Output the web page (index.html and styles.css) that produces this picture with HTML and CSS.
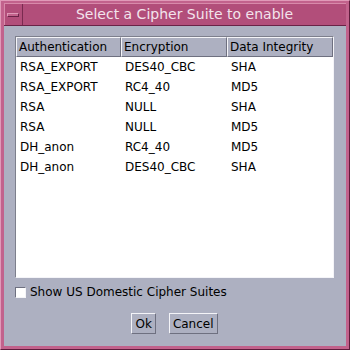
FILE: index.html
```html
<!DOCTYPE html>
<html lang="en">
<head>
    <meta charset="UTF-8">
    <title>Select a Cipher Suite to enable</title>
    <link rel="stylesheet" href="styles.css">
</head>
<body>
    <div class="window">
        <div class="titlebar">
            <div class="menu-btn"><span class="menu-bar"></span></div>
            <div class="title">Select a Cipher Suite to enable</div>
        </div>

        <div class="content">
            <!-- cipher table -->
            <div class="table">
                <div class="row head">
                    <div class="cell">Authentication</div>
                    <div class="cell">Encryption</div>
                    <div class="cell">Data Integrity</div>
                </div>
                <div class="row"><div class="cell">RSA_EXPORT</div><div class="cell">DES40_CBC</div><div class="cell">SHA</div></div>
                <div class="row"><div class="cell">RSA_EXPORT</div><div class="cell">RC4_40</div><div class="cell">MD5</div></div>
                <div class="row"><div class="cell">RSA</div><div class="cell">NULL</div><div class="cell">SHA</div></div>
                <div class="row"><div class="cell">RSA</div><div class="cell">NULL</div><div class="cell">MD5</div></div>
                <div class="row"><div class="cell">DH_anon</div><div class="cell">RC4_40</div><div class="cell">MD5</div></div>
                <div class="row"><div class="cell">DH_anon</div><div class="cell">DES40_CBC</div><div class="cell">SHA</div></div>
            </div>

            <label class="check">
                <span class="box"></span>
                <span>Show US Domestic Cipher Suites</span>
            </label>

            <div class="buttons">
                <button class="btn">Ok</button>
                <button class="btn">Cancel</button>
            </div>
        </div>
    </div>
</body>
</html>
```

FILE: styles.css
```css
body {
    margin: 0;
    font-family: "DejaVu Sans", sans-serif;
    font-size: 12px;
    color: #000;
}
.window {
    width: 350px;
    height: 350px;
    box-sizing: border-box;
    display: flex;
    flex-direction: column;
    background-color: #c2628c;
    border: 1px solid;
    border-color: #e09ab8 #5e1c3c #5e1c3c #e09ab8;
    padding: 2px 3px 3px 3px;
}
.titlebar {
    height: 21px;
    display: flex;
    background-color: #b24e7a;
    border-top: 1px solid #d88aaa;
}
.menu-btn {
    width: 18px;
    display: flex;
    align-items: center;
    justify-content: center;
    border-right: 1px solid #7a2a50;
    box-shadow: inset 1px 0 #d88aaa;
}
.menu-bar {
    width: 10px;
    height: 2px;
    background-color: #c2628c;
    border: 1px solid;
    border-color: #e09ab8 #6a2246 #6a2246 #e09ab8;
}
.title {
    flex: 1;
    text-align: center;
    color: #f2e4ec;
    font-size: 14px;
    line-height: 20px;
}
.content {
    flex: 1;
    background-color: #adb0c1;
    padding: 10px 12px 12px 11px;
    display: flex;
    flex-direction: column;
    border-top: 1px solid #6a2246;
}
.table {
    height: 242px;
    box-sizing: border-box;
    background-color: #fff;
    border: 1px solid;
    border-color: #7d7f8c #f4f4f8 #f4f4f8 #7d7f8c;
    box-shadow: inset 1px 1px #ffffff;
}
.row {
    display: grid;
    grid-template-columns: 105px 106px 1fr;
    height: 20px;
    line-height: 20px;
}
.row .cell {
    padding-left: 4px;
    white-space: nowrap;
}
.head {
    background-color: #adb0c1;
}
.head .cell {
    border: 1px solid;
    border-color: #f4f4f8 #6e7080 #6e7080 #f4f4f8;
    line-height: 18px;
    padding-left: 2px;
}
.check {
    display: flex;
    align-items: center;
    gap: 4px;
    margin-top: 7px;
    height: 14px;
}
.box {
    width: 9px;
    height: 9px;
    background-color: #fff;
    border: 1px solid;
    border-color: #6e7080 #f4f4f8 #f4f4f8 #6e7080;
}
.buttons {
    margin-top: auto;
    display: flex;
    justify-content: center;
    gap: 13px;
}
.btn {
    font-family: inherit;
    font-size: 12px;
    height: 21px;
    padding: 0 3px;
    background-color: #adb0c1;
    border: 1px solid;
    border-color: #f4f4f8 #6e7080 #6e7080 #f4f4f8;
    color: #000;
}
```
